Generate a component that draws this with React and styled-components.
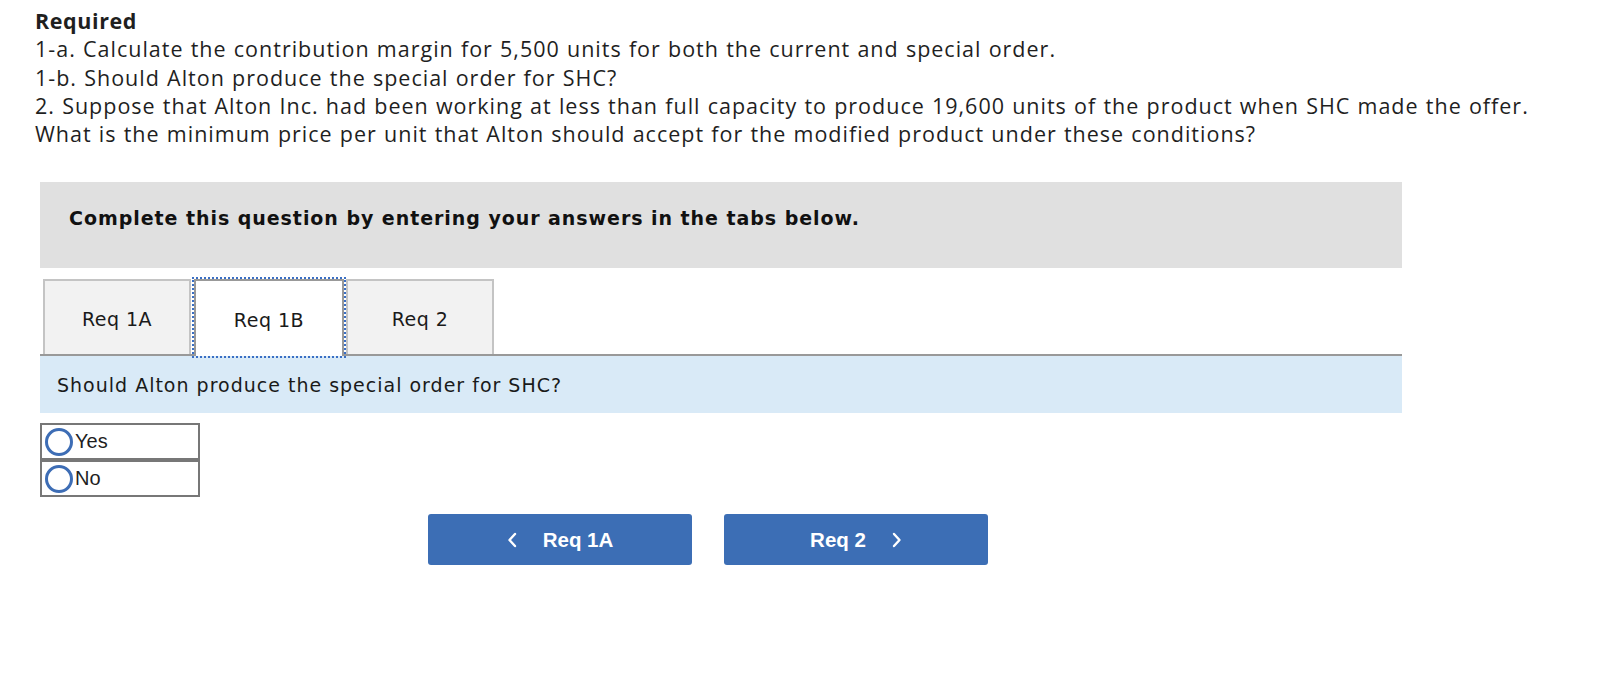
import React, { useState } from "react";
import styled, { createGlobalStyle } from "styled-components";

const GlobalStyle = createGlobalStyle`
  html, body {
    margin: 0;
    padding: 0;
    background: #ffffff;
  }
`;

export default function App() {
  const [tab, setTab] = useState("1B");
  const [answer, setAnswer] = useState(null);

  const tabs = [
    { id: "1A", label: "Req 1A" },
    { id: "1B", label: "Req 1B" },
    { id: "2", label: "Req 2" },
  ];

  return (
    <Page>
      <GlobalStyle />
      <Intro>
        <Heading>Required</Heading>
        <Line>1-a. Calculate the contribution margin for 5,500 units for both the current and special order.</Line>
        <Line>1-b. Should Alton produce the special order for SHC?</Line>
        <Line>
          2. Suppose that Alton Inc. had been working at less than full capacity to produce 19,600 units of the product when SHC made the offer.
        </Line>
        <Line>What is the minimum price per unit that Alton should accept for the modified product under these conditions?</Line>
      </Intro>

      <Panel>
        <Instruction>Complete this question by entering your answers in the tabs below.</Instruction>

        <TabBar>
          {tabs.map((t) => (
            <Tab key={t.id} active={tab === t.id} onClick={() => setTab(t.id)}>
              {t.label}
            </Tab>
          ))}
        </TabBar>

        <Prompt>Should Alton produce the special order for SHC?</Prompt>

        <Choices>
          <tbody>
            {["Yes", "No"].map((opt) => (
              <ChoiceRow key={opt} onClick={() => setAnswer(opt)}>
                <ChoiceCell>
                  <Radio checked={answer === opt} />
                  <ChoiceLabel>{opt}</ChoiceLabel>
                </ChoiceCell>
              </ChoiceRow>
            ))}
          </tbody>
        </Choices>

        <NavRow>
          <NavButton onClick={() => setTab("1A")}>
            <Chevron viewBox="0 0 10 16">
              <path d="M8 2 L2.5 8 L8 14" />
            </Chevron>
            Req 1A
          </NavButton>
          <NavButton onClick={() => setTab("2")}>
            Req 2
            <Chevron viewBox="0 0 10 16">
              <path d="M2 2 L7.5 8 L2 14" />
            </Chevron>
          </NavButton>
        </NavRow>
      </Panel>
    </Page>
  );
}

const Page = styled.div`
  padding: 7px 0 40px 35px;
  width: 1580px;
  box-sizing: border-box;
`;

const Intro = styled.div`
  font-family: "Open Sans", "Liberation Sans", sans-serif;
  font-size: 21.5px;
  letter-spacing: 1px;
  word-spacing: 0.6px;
  line-height: 28.3px;
  color: #1f1f1f;
`;

const Heading = styled.div`
  font-weight: 700;
  letter-spacing: 0.6px;
`;

const Line = styled.div`
  white-space: nowrap;
`;

const Panel = styled.div`
  margin: 34px 0 0 5px;
  width: 1362px;
`;

const Instruction = styled.div`
  height: 86px;
  box-sizing: border-box;
  padding: 25px 29px 0;
  background: #e0e0e0;
  font-family: "DejaVu Sans", Verdana, sans-serif;
  font-weight: 700;
  font-size: 19px;
  letter-spacing: 0.95px;
  color: #111111;
`;

const TabBar = styled.div`
  display: flex;
  align-items: flex-end;
  margin-top: 11px;
  padding-left: 3px;
  border-bottom: 2px solid #999999;
`;

const Tab = styled.button`
  width: ${(p) => (p.active ? "150px" : "148px")};
  height: ${(p) => (p.active ? "77px" : "75px")};
  margin: ${(p) => (p.active ? "0 2px -2px 3px" : "0")};
  padding: 2px 0 0 0;
  box-sizing: border-box;
  background: ${(p) => (p.active ? "#ffffff" : "#f2f2f2")};
  border: 2px solid ${(p) => (p.active ? "#999999" : "#c4c4c4")};
  border-bottom: 0;
  outline: ${(p) => (p.active ? "2px dotted #3a6fc4" : "none")};
  font-family: "DejaVu Sans", Verdana, sans-serif;
  font-size: 19px;
  letter-spacing: 0.5px;
  color: #1a1a1a;
  cursor: pointer;
  display: flex;
  align-items: center;
  justify-content: center;
`;

const Prompt = styled.div`
  height: 57px;
  box-sizing: border-box;
  padding: 0 17px;
  display: flex;
  align-items: center;
  background: #d9eaf7;
  font-family: "DejaVu Sans", Verdana, sans-serif;
  font-size: 19px;
  letter-spacing: 1px;
  color: #1a1a1a;
`;

const Choices = styled.table`
  margin-top: 10px;
  width: 160px;
  border-collapse: collapse;
`;

const ChoiceRow = styled.tr`
  cursor: pointer;
`;

const ChoiceCell = styled.td`
  height: 37px;
  box-sizing: border-box;
  border: 2px solid #777777;
  padding: 0 0 0 3px;
  display: flex;
  align-items: center;
  gap: 2px;
`;

const Radio = styled.span`
  width: 28px;
  height: 28px;
  box-sizing: border-box;
  border-radius: 50%;
  border: 3px solid #3d6db5;
  background: ${(p) => (p.checked ? "radial-gradient(circle, #3d6db5 0 5px, #fff 6px)" : "#ffffff")};
  flex-shrink: 0;
`;

const ChoiceLabel = styled.span`
  font-family: "Liberation Sans", Arial, sans-serif;
  font-size: 20px;
  color: #1f1f1f;
`;

const NavRow = styled.div`
  display: flex;
  gap: 32px;
  margin: 17px 0 0 388px;
`;

const NavButton = styled.button`
  width: 264px;
  height: 51px;
  border: none;
  border-radius: 3px;
  background: #3c6eb5;
  color: #ffffff;
  font-family: "Liberation Sans", Arial, sans-serif;
  font-weight: 700;
  font-size: 20.5px;
  display: flex;
  align-items: center;
  justify-content: center;
  gap: 26px;
  cursor: pointer;
`;

const Chevron = styled.svg`
  width: 10px;
  height: 16px;
  fill: none;
  stroke: #ffffff;
  stroke-width: 2.4;
  stroke-linecap: round;
  stroke-linejoin: round;
`;
